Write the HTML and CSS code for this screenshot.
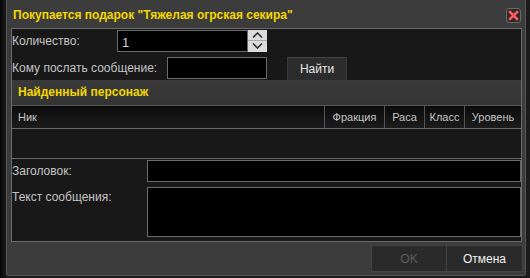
FILE: index.html
```html
<!DOCTYPE html>
<html lang="ru">
<head>
    <meta charset="UTF-8">
    <title>Покупается подарок</title>
    <link rel="stylesheet" href="styles.css">
</head>
<body>
    <div class="dialog">
        <div class="titlebar">
            <span class="title">Покупается подарок "Тяжелая огрская секира"</span>
            <span class="close">
                <svg width="11" height="11" viewBox="0 0 11 11">
                    <path d="M2 2 L9 9 M9 2 L2 9" stroke="#ff5a5a" stroke-width="2.6" stroke-linecap="square"/>
                </svg>
            </span>
        </div>

        <div class="panel">
            <!-- количество -->
            <div class="row row-count">
                <label class="lbl lbl-count">Количество:</label>
                <div class="input num">1</div>
                <div class="spin">
                    <span class="spin-btn">
                        <svg width="11" height="6" viewBox="0 0 11 6"><path d="M1 5.5 L5.5 1 L10 5.5" fill="none" stroke="#333" stroke-width="1.6"/></svg>
                    </span>
                    <span class="spin-btn">
                        <svg width="11" height="6" viewBox="0 0 11 6"><path d="M1 0.5 L5.5 5 L10 0.5" fill="none" stroke="#333" stroke-width="1.6"/></svg>
                    </span>
                </div>
            </div>

            <!-- кому -->
            <div class="row row-to">
                <label class="lbl lbl-to">Кому послать сообщение:</label>
                <div class="input to"></div>
                <button class="find">Найти</button>
            </div>

            <div class="section">Найденный персонаж</div>

            <div class="thead">
                <div class="th th-nick">Ник</div>
                <div class="th th-frac">Фракция</div>
                <div class="th th-race">Раса</div>
                <div class="th th-class">Класс</div>
                <div class="th th-level">Уровень</div>
            </div>
            <div class="tbody"></div>

            <div class="row row-subj">
                <label class="lbl lbl-wide">Заголовок:</label>
                <div class="input subj"></div>
            </div>
            <div class="row row-text">
                <label class="lbl lbl-wide">Текст сообщения:</label>
                <div class="input text"></div>
            </div>
        </div>

        <div class="footer">
            <button class="btn btn-ok">OK</button>
            <button class="btn btn-cancel">Отмена</button>
        </div>
    </div>
</body>
</html>
```

FILE: styles.css
```css
/* основа */
body {
    margin: 0;
    background: linear-gradient(to right, #050505, #1c1c1c 6px, #1c1c1c);
    font-family: "Liberation Sans", Arial, sans-serif;
    font-size: 12px;
    color: #c4c4c4;
    height: 278px;
    overflow: hidden;
}

/* окно */
.dialog {
    margin-left: 6px;
    width: 518px;
    height: 275px;
    border: 1px solid #555;
    border-top: none;
    border-radius: 0 0 3px 3px;
    background-color: #3c3c3c;
}

.titlebar {
    height: 28px;
    display: flex;
    align-items: center;
    justify-content: space-between;
    padding: 0 4px 0 6px;
}

.title {
    color: #f5d800;
    font-weight: bold;
    font-size: 12px;
    margin-top: 2px;
}

.close {
    width: 13px;
    height: 13px;
    border: 1px solid #6a6a6a;
    border-radius: 3px;
    background-color: #2a2a2a;
    display: flex;
    align-items: center;
    justify-content: center;
    margin-top: 2px;
}

/* панель */
.panel {
    margin: 0 3px 0 4px;
    border: 1px solid #6a6a6a;
    background-color: #181818;
    height: 212px;
}

.row {
    display: flex;
    align-items: center;
}

.lbl {
    padding-left: 0;
    color: #c4c4c4;
}

.row-count {
    height: 21px;
    margin-top: 1px;
}

.lbl-count {
    width: 105px;
}

.input {
    box-sizing: border-box;
    background-color: #000;
    border: 1px solid #6a6a6a;
}

.num {
    width: 131px;
    height: 22px;
    color: #d0d0d0;
    font-size: 13px;
    padding: 4px 0 0 4px;
}

.spin {
    width: 19px;
    height: 22px;
    display: flex;
    flex-direction: column;
    background-color: #dcdcdc;
}

.spin-btn {
    flex: 1;
    display: flex;
    align-items: center;
    justify-content: center;
}

.spin-btn:first-child {
    border-bottom: 1px solid #aaa;
}

.row-to {
    height: 23px;
    margin-top: 6px;
    align-items: stretch;
}

.lbl-to {
    width: 155px;
    display: flex;
    align-items: center;
    height: 21px;
}

.to {
    width: 100px;
    height: 22px;
}

.find {
    margin-left: 20px;
    width: 60px;
    height: 23px;
    background-color: #2c2c2c;
    border: none;
    border-top: 1px solid #444;
    border-left: 1px solid #3a3a3a;
    border-right: 1px solid #3a3a3a;
    color: #e8e8e8;
    font-family: inherit;
    font-size: 12px;
    padding: 0;
}

.section {
    height: 25px;
    line-height: 24px;
    background: linear-gradient(#3a3a3a, #333);
    border-bottom: 1px solid #555;
    color: #f5d800;
    font-weight: bold;
    padding-left: 6px;
}

/* таблица */
.thead {
    display: flex;
    height: 22px;
    background: linear-gradient(#0a0a0a, #1c1c1c);
    border-bottom: 1px solid #6a6a6a;
}

.th {
    line-height: 22px;
    color: #c4c4c4;
    font-size: 11px;
    text-align: center;
    border-left: 1px solid #555;
}

.th-nick {
    flex: 1;
    text-align: left;
    padding-left: 6px;
    border-left: none;
}

.th-frac { width: 59px; }
.th-race { width: 39px; }
.th-class { width: 39px; }
.th-level { width: 56px; }

.tbody {
    height: 29px;
    border-bottom: 1px solid #6a6a6a;
}

.row-subj {
    margin-top: 1px;
    align-items: center;
}

.lbl-wide {
    width: 135px;
}

.subj {
    flex: 1;
    height: 22px;
}

.row-text {
    margin-top: 5px;
    align-items: flex-start;
}

.row-text .lbl {
    margin-top: 3px;
}

.text {
    flex: 1;
    height: 50px;
}

/* кнопки */
.footer {
    display: flex;
    justify-content: flex-end;
    padding: 3px 2px 0 0;
}

.btn {
    width: 76px;
    height: 27px;
    background-color: #2a2a2a;
    border: 1px solid #444;
    font-family: inherit;
    font-size: 12px;
    padding: 0;
}

.btn-ok {
    color: #5e5e5e;
}

.btn-cancel {
    color: #f0f0f0;
    border-left: none;
}
```
